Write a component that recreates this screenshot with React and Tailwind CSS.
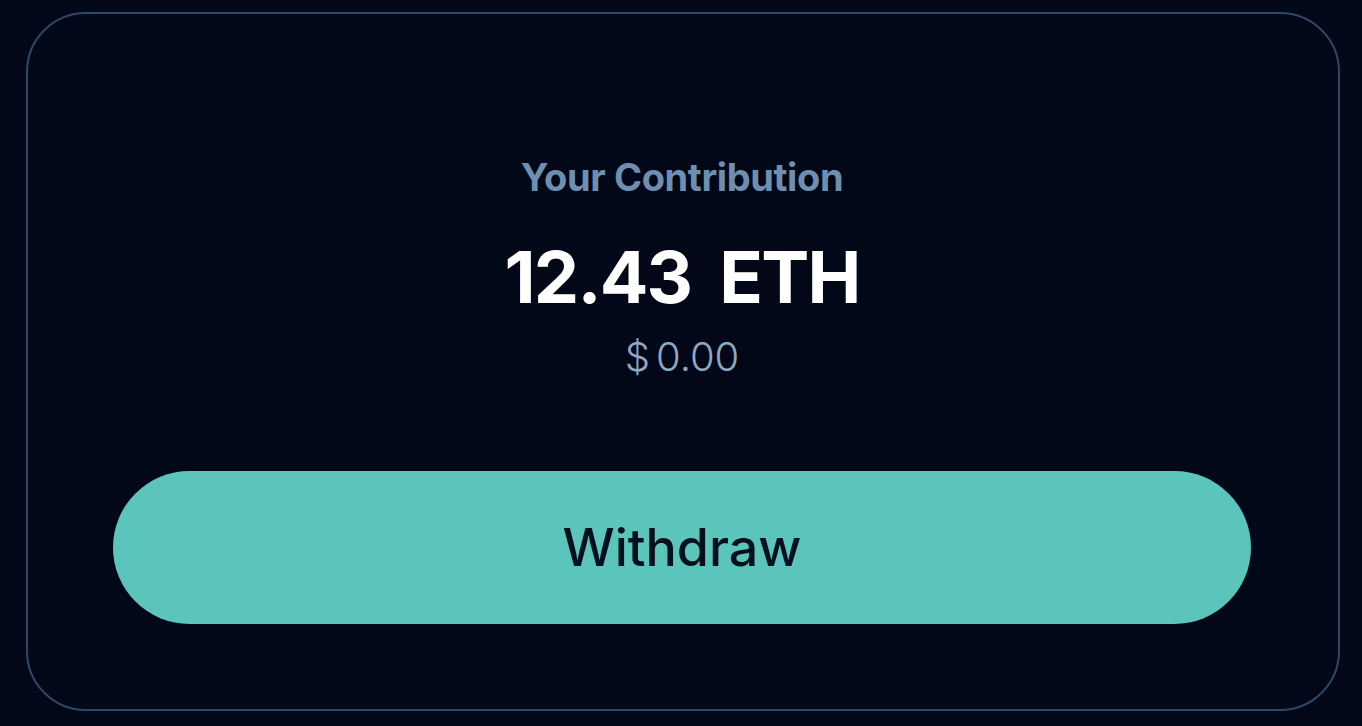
import React from "react";

export default function App() {
  return (
    <div
      className="min-h-screen bg-[#020817] pl-[26px] pr-[22px] pt-[12px] pb-[15px]"
      style={{ fontFamily: "Inter, 'Liberation Sans', sans-serif" }}
    >
      <div className="h-[699px] rounded-[60px] border-2 border-[#2d4866] flex flex-col items-center pt-[141px] pl-[85px] pr-[87px]">
        <p className="text-[38px] leading-[44px] font-bold text-[#6f8fb0] tracking-[-0.01em]">
          Your Contribution
        </p>
        <p className="mt-[38px] flex gap-[28px] text-[72px] leading-[80px] font-bold text-white tracking-[-0.025em]">
          <span>12.43</span>
          <span>ETH</span>
        </p>
        <p className="mt-[16px] flex gap-[6px] text-[40px] leading-[48px] font-light text-[#90a8c2]">
          <span>$</span>
          <span>0.00</span>
        </p>
        <button className="mt-[90px] w-full h-[153px] rounded-full bg-[#5bc5bc] text-[52px] font-medium text-[#01101c]">
          Withdraw
        </button>
      </div>
    </div>
  );
}
